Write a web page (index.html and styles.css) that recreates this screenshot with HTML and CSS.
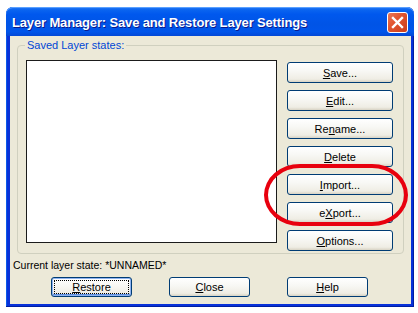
FILE: index.html
```html
<!DOCTYPE html>
<html lang="en">
<head>
  <meta charset="UTF-8" />
  <title>Layer Manager: Save and Restore Layer Settings</title>
  <link rel="stylesheet" href="styles.css">
</head>
<body>
  <div class="window">
    <div class="titlebar">
      <span class="title">Layer Manager: Save and Restore Layer Settings</span>
      <button class="close-btn" aria-label="Close">
        <svg width="13" height="13" viewBox="0 0 13 13">
          <path d="M2 2 L11 11 M11 2 L2 11" stroke="#fff" stroke-width="2.4" stroke-linecap="square" />
        </svg>
      </button>
    </div>

    <div class="client">
      <div class="group">
        <span class="group-label">Saved Layer states:</span>
        <div class="listbox"></div>
        <div class="side-buttons">
          <button class="btn"><u>S</u>ave...</button>
          <button class="btn"><u>E</u>dit...</button>
          <button class="btn">Re<u>n</u>ame...</button>
          <button class="btn"><u>D</u>elete</button>
          <button class="btn"><u>I</u>mport...</button>
          <button class="btn">e<u>X</u>port...</button>
          <button class="btn"><u>O</u>ptions...</button>
        </div>
      </div>

      <div class="status">Current layer state: *UNNAMED*</div>

      <div class="bottom-buttons">
        <button class="btn btn-wide btn-default"><span class="focus"><u>R</u>estore</span></button>
        <button class="btn btn-wide"><u>C</u>lose</button>
        <button class="btn btn-wide"><u>H</u>elp</button>
      </div>
    </div>
  </div>

  <!-- annotation drawn over the screenshot -->
  <div class="highlight"></div>
</body>
</html>
```

FILE: styles.css
```css
:root {
  --face: #ece9d8;
  --xp-blue: #0054e3;
  --frame: #0831d9;
  --btn-border: #003c74;
  --group-border: #d0d0bf;
  --label-blue: #0046d5;
}

* {
  box-sizing: border-box;
}

body {
  margin: 0;
  background: #fff;
  font-family: 'Liberation Sans', Arial, sans-serif;
  font-size: 10.5px;
  position: relative;
  width: 418px;
  height: 313px;
  overflow: hidden;
}

.window {
  margin: 7px 0 0 6px;
  width: 408px;
  height: 300px;
  background: var(--frame);
  border-radius: 7px 7px 0 0;
  padding: 0 3px 3px 4px;
  display: flex;
  flex-direction: column;
  box-shadow: inset -1px -1px 0 #001ea0, inset 1px 0 0 #0a5ae8;
}

.titlebar {
  height: 29px;
  margin: 0 -3px 0 -4px;
  border-radius: 7px 7px 0 0;
  background: linear-gradient(to bottom, #2a7cf6 0%, #0a64f0 10%, #0058ee 25%, #0054e6 60%, #0055ea 85%, #0348d6 100%);
  display: flex;
  align-items: center;
  padding: 0 6px 0 6px;
  box-shadow: inset 0 1px 0 #5aa0ff;
}

.title {
  flex: 1;
  color: #fff;
  font-weight: bold;
  font-size: 13px;
  letter-spacing: -0.15px;
  padding-top: 1px;
  text-shadow: 1px 1px 0 #0a1a8c;
  white-space: nowrap;
}

.close-btn {
  width: 21px;
  height: 21px;
  padding: 0;
  border: 1px solid #fff;
  border-radius: 3px;
  background: linear-gradient(135deg, #e8795a 0%, #e2552f 40%, #cc3e1b 100%);
  display: flex;
  align-items: center;
  justify-content: center;
  margin-top: 1px;
}

.client {
  flex: 1;
  background: var(--face);
  padding: 9px 7px 0 3px;
  display: flex;
  flex-direction: column;
}

.group {
  position: relative;
  height: 209px;
  margin-left: 4px;
  border: 1px solid var(--group-border);
  border-radius: 4px;
  padding: 14px 9px 0 8px;
  display: flex;
  gap: 10px;
}

.group-label {
  position: absolute;
  top: -7px;
  left: 7px;
  padding: 0 2px 0 2px;
  background: var(--face);
  color: var(--label-blue);
  font-size: 11px;
  line-height: 13px;
}

.listbox {
  width: 251px;
  height: 183px;
  background: #fff;
  border: 1px solid #1b1b1b;
}

.side-buttons {
  width: 106px;
  padding-top: 2px;
  display: flex;
  flex-direction: column;
  gap: 7px;
}

.btn {
  height: 21px;
  border: 1px solid var(--btn-border);
  border-radius: 3px;
  background: linear-gradient(to bottom, #ffffff 0%, #f8f8f5 40%, #efede4 85%, #d8d3c4 100%);
  font-family: 'Liberation Sans', Arial, sans-serif;
  font-size: 11px;
  color: #000;
  padding: 0;
  text-align: center;
}

.status {
  margin-top: 5px;
  line-height: 13px;
  color: #000;
}

.bottom-buttons {
  margin-top: 5px;
  padding-left: 38px;
  display: flex;
  gap: 37px;
}

.btn-wide {
  width: 81px;
  height: 20px;
}

.btn-default {
  box-shadow: inset 0 0 0 1px #8fb3f0, inset 0 -1px 0 1px #5b8ee0;
  padding: 2px;
}

.focus {
  display: block;
  height: 100%;
  border: 1px dotted #000;
  line-height: 12px;
}

.highlight {
  position: absolute;
  left: 264px;
  top: 164px;
  width: 144px;
  height: 62px;
  border: 4px solid #e8000e;
  border-radius: 36px / 31px;
}
```
